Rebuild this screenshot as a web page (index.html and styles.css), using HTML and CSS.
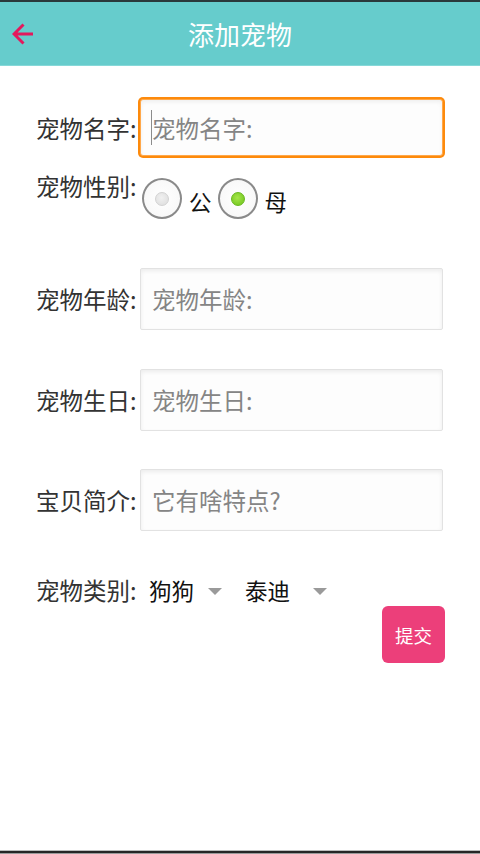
FILE: index.html
```html
<!DOCTYPE html>
<html lang="zh-CN">
<head>
<meta charset="utf-8">
<title>添加宠物</title>
<link rel="stylesheet" href="styles.css">
</head>
<body>
<div class="app">
  <header class="topbar">
    <div class="back">
      <svg width="22" height="22" viewBox="0 0 22 22"><path d="M2 11 H21 M11.5 1.5 L2 11 L11.5 20.5" fill="none" stroke="#e3195d" stroke-width="3" stroke-linecap="butt" stroke-linejoin="miter"/></svg>
    </div>
    <h1 class="title">添加宠物</h1>
    <div class="spacer"></div>
  </header>

  <main class="form">
    <div class="row row-name">
      <label class="label">宠物名字:</label>
      <div class="field focused"><span class="caret"></span><span class="ph">宠物名字:</span></div>
    </div>

    <div class="row row-gender">
      <label class="label">宠物性别:</label>
      <div class="radios">
        <div class="radio-item"><span class="radio"><span class="dot"></span></span><span class="rtext">公</span></div>
        <div class="radio-item"><span class="radio checked"><span class="dot"></span></span><span class="rtext">母</span></div>
      </div>
    </div>

    <div class="row row-age">
      <label class="label">宠物年龄:</label>
      <div class="field"><span class="ph">宠物年龄:</span></div>
    </div>

    <div class="row row-birth">
      <label class="label">宠物生日:</label>
      <div class="field"><span class="ph">宠物生日:</span></div>
    </div>

    <div class="row row-intro">
      <label class="label">宝贝简介:</label>
      <div class="field"><span class="ph">它有啥特点?</span></div>
    </div>

    <div class="row row-cat">
      <label class="label">宠物类别:</label>
      <div class="spinner sp1"><span class="sptext">狗狗</span><span class="tri"></span></div>
      <div class="spinner sp2"><span class="sptext">泰迪</span><span class="tri"></span></div>
    </div>

    <div class="actions">
      <button class="submit" type="button">提交</button>
    </div>
  </main>

  <footer class="bottom"></footer>
</div>
</body>
</html>
```

FILE: styles.css
```css
* { box-sizing: border-box; }
html, body { margin: 0; padding: 0; }
body {
  background: #ffffff;
  font-family: "Noto Sans CJK SC", "Noto Sans", sans-serif;
  color: #333;
}
.app {
  height: 854px;
  display: flex;
  flex-direction: column;
}
.topbar {
  height: 66px;
  background: #66cccc;
  border-top: 2px solid #2a393b;
  border-bottom: 1px solid #86d8d8;
  display: grid;
  grid-template-columns: 1fr auto 1fr;
  align-items: center;
}
.back {
  padding-left: 12px;
  display: flex;
  align-items: center;
  height: 100%;
}
.back svg { display: block; }
.title {
  margin: 0;
  font-weight: 400;
  font-size: 26px;
  line-height: 32px;
  color: #ffffff;
}
.form {
  flex: 1;
  padding: 0 35px 0 36px;
  display: flex;
  flex-direction: column;
}
.row {
  display: flex;
  align-items: center;
}
.label {
  width: 104px;
  flex: none;
  font-size: 23.5px;
  line-height: 30px;
  color: #333;
  white-space: nowrap;
}
.field {
  position: relative;
  width: 303px;
  height: 62px;
  border: 1px solid #e2e2e2;
  border-radius: 2px;
  background: #fdfdfd;
  box-shadow: inset 0 2px 4px rgba(0,0,0,0.07);
  display: flex;
  align-items: center;
  padding-left: 11px;
}
.ph {
  font-size: 23.5px;
  line-height: 30px;
  color: #858585;
  white-space: nowrap;
}
.focused {
  height: 57px;
  border: 1px solid #ffa84a;
  border-radius: 3px;
  box-shadow: 0 0 0 2px #fd8a0c, inset 0 2px 4px rgba(0,0,0,0.06);
}
.caret {
  position: absolute;
  left: 10px;
  top: 10px;
  width: 1px;
  height: 35px;
  background: #8c8c8c;
}
.row-name { margin-top: 33px; }
.row-gender {
  margin-top: 15px;
  align-items: flex-start;
}
.radios {
  display: flex;
  align-items: center;
  margin-left: 2px;
  margin-top: 7px;
}
.radio-item {
  display: flex;
  align-items: center;
  margin-right: 6px;
}
.radio {
  width: 40px;
  height: 41px;
  border-radius: 50%;
  border: 2px solid #8a8a8a;
  background: radial-gradient(circle, #ffffff 0%, #f6f6f6 100%);
  display: flex;
  align-items: center;
  justify-content: center;
}
.dot {
  width: 14px;
  height: 14px;
  border-radius: 50%;
  background: radial-gradient(circle at 45% 40%, #f0f0f0 0%, #dcdcdc 100%);
  border: 1px solid #d2d2d2;
}
.radio.checked .dot {
  background: radial-gradient(circle at 45% 40%, #a6e64a 0%, #6cc21a 100%);
  border-color: #69b81e;
}
.rtext {
  margin-left: 7px;
  font-size: 22.5px;
  line-height: 30px;
  color: #111;
  margin-top: 4px;
}
.row-age { margin-top: 49px; }
.row-birth { margin-top: 39px; }
.row-intro { margin-top: 38px; }
.row-cat { margin-top: 44px; }
.spinner {
  display: flex;
  align-items: center;
}
.sp1 { margin-left: 9px; }
.sp2 { margin-left: 23px; }
.sptext {
  font-size: 22.5px;
  line-height: 30px;
  color: #111;
}
.tri {
  width: 0;
  height: 0;
  border-left: 7px solid transparent;
  border-right: 7px solid transparent;
  border-top: 7px solid #9a9a9a;
  margin-top: 2px;
}
.sp1 .tri { margin-left: 14px; }
.sp2 .tri { margin-left: 23px; }
.actions {
  display: flex;
  justify-content: flex-end;
  margin-top: 1px;
}
.submit {
  width: 63px;
  height: 57px;
  border: none;
  border-radius: 6px;
  background: #ec3f7a;
  color: #ffffff;
  font-family: "Noto Sans CJK SC", "Noto Sans", sans-serif;
  font-size: 18.5px;
  line-height: 24px;
  padding: 0;
}
.bottom {
  height: 4px;
  flex: none;
  border-top: 1px solid #bdbdbd;
  border-bottom: 1px solid #9a9a9a;
  background: #262626;
}
```
